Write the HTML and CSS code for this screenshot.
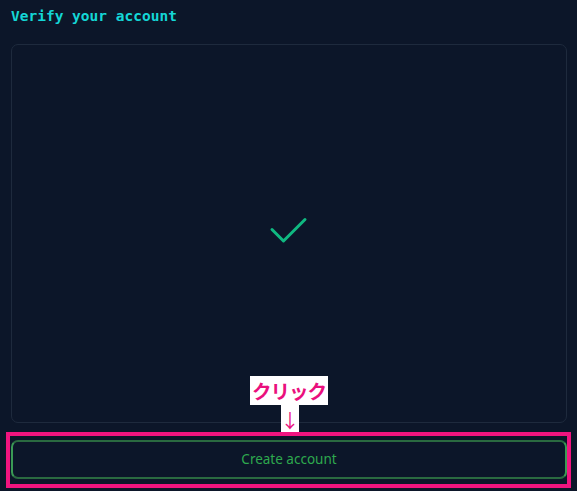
FILE: index.html
```html
<!DOCTYPE html>
<html lang="en">
<head>
<meta charset="utf-8">
<link rel="stylesheet" href="styles.css">
</head>
<body>
<main class="page">
  <h1 class="title">Verify your account</h1>
  <section class="card">
    <svg class="check" width="40" height="30" viewBox="0 0 40 30" aria-hidden="true">
      <polyline points="3,13.5 14.5,25 36,3.5" fill="none" stroke="#10b981" stroke-width="3" stroke-linecap="round" stroke-linejoin="round"/>
    </svg>
  </section>
  <div class="action">
    <button class="btn">Create account</button>
    <div class="highlight"></div>
    <div class="callout">
      <span class="callout-label">クリック</span>
      <span class="callout-arrow">↓</span>
    </div>
  </div>
</main>
</body>
</html>
```

FILE: styles.css
```css
html, body {
  margin: 0;
  padding: 0;
  background: #0c1629;
  width: 577px;
  height: 491px;
  overflow: hidden;
}

.page {
  display: flex;
  flex-direction: column;
  padding: 0 10px 0 11px;
}

.title {
  margin: 0;
  height: 44px;
  padding-top: 6px;
  box-sizing: border-box;
  font-family: "DejaVu Sans Mono", monospace;
  font-weight: bold;
  font-size: 14.5px;
  line-height: 20px;
  color: #14d6d6;
}

.card {
  height: 379px;
  box-sizing: border-box;
  border: 1px solid #1e2a3d;
  border-radius: 7px;
  display: flex;
  align-items: center;
  justify-content: center;
}

.check {
  display: block;
  margin: 0 0 5px 0;
}

.action {
  position: relative;
  margin-top: 17px;
}

.btn {
  display: block;
  width: 100%;
  height: 39px;
  box-sizing: border-box;
  background: transparent;
  border: 2px solid #2a6a40;
  border-left-color: #3a9a55;
  border-right-color: #3a9a55;
  border-radius: 7px;
  color: #2ea94e;
  font-family: "Noto Sans", sans-serif;
  font-size: 13.5px;
  padding: 0 0 1px;
}

.highlight {
  position: absolute;
  left: -5px;
  top: -8px;
  width: 565px;
  height: 56px;
  box-sizing: border-box;
  border: 4px solid #f0147f;
  pointer-events: none;
}

.callout {
  position: absolute;
  left: 239px;
  top: -64px;
  display: flex;
  flex-direction: column;
  align-items: center;
}

.callout-label {
  background: #ffffff;
  color: #ea0f7d;
  font-family: "Noto Sans CJK JP", sans-serif;
  font-weight: bold;
  font-size: 19.5px;
  line-height: 29px;
  width: 78px;
  box-sizing: border-box;
  text-align: center;
  letter-spacing: -1px;
  white-space: nowrap;
}

.callout-arrow {
  background: #ffffff;
  color: #ea0f7d;
  font-family: "Noto Sans CJK JP", sans-serif;
  font-size: 19px;
  line-height: 27px;
  height: 27px;
  width: 18px;
  text-align: center;
  margin-left: 2px;
  overflow: hidden;
  display: flex;
  justify-content: center;
  padding-top: 1px;
  box-sizing: border-box;
}
```
